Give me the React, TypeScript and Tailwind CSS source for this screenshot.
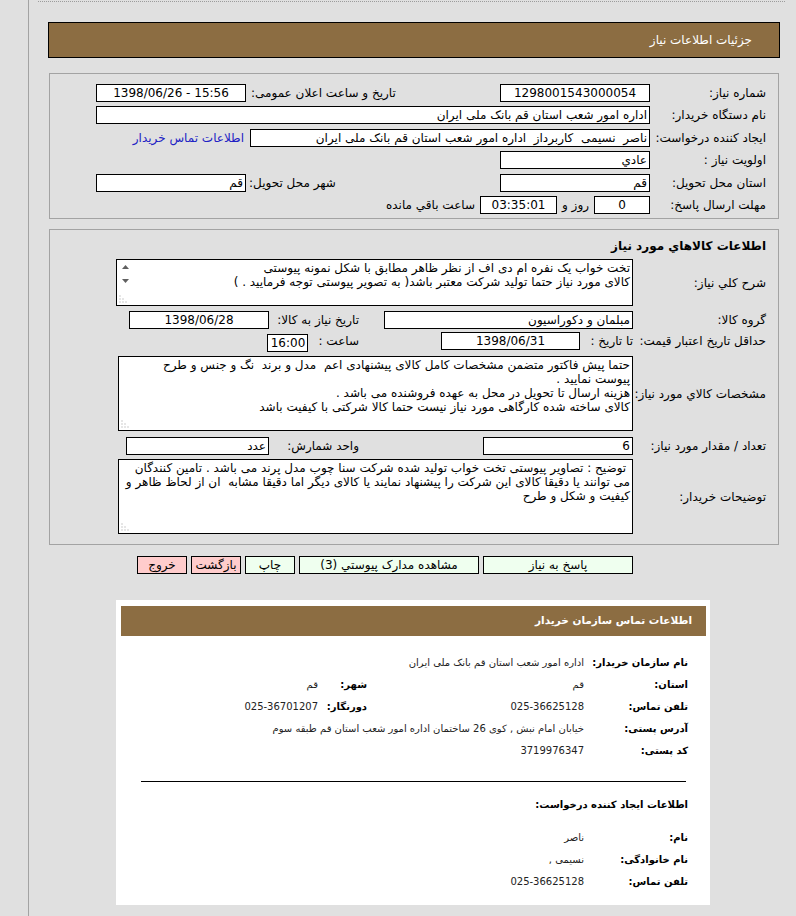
import React from 'react';

// read-only box that looks like an old-style input
function Box({ value, className = '', ltr = false }: { value: string; className?: string; ltr?: boolean }) {
  return (
    <div
      dir={ltr ? 'ltr' : undefined}
      className={`h-[18px] shrink-0 overflow-hidden whitespace-pre border border-black bg-white px-[2px] leading-[16px] ${className}`}
    >
      {value}
    </div>
  );
}

function Grip() {
  return (
    <svg className="absolute bottom-[2px] left-[2px]" width="8" height="8" viewBox="0 0 8 8">
      {[
        [1, 1], [1, 4], [1, 7], [4, 4], [4, 7], [7, 7],
      ].map(([x, y], i) => (
        <rect key={i} x={x - 0.5} y={y - 0.5} width="1" height="1" fill="#9a9a9a" />
      ))}
    </svg>
  );
}

function Area({ lines, className = '', scroll = false }: { lines: string[]; className?: string; scroll?: boolean }) {
  return (
    <div className={`relative shrink-0 overflow-hidden border border-black bg-white pr-[2px] pt-[1px] leading-[14px] ${className}`}>
      {lines.map((l, i) => (
        <div key={i} className="whitespace-pre">{l}</div>
      ))}
      {scroll && (
        <div className="absolute left-0 top-0 flex h-full w-[16px] flex-col items-center pt-[5px]">
          <svg width="7" height="4" viewBox="0 0 7 4"><path d="M0 4 L3.5 0 L7 4 Z" fill="#606060" /></svg>
          <svg className="mt-[10px]" width="7" height="4" viewBox="0 0 7 4"><path d="M0 0 L3.5 4 L7 0 Z" fill="#606060" /></svg>
        </div>
      )}
      <Grip />
    </div>
  );
}

function Btn({ label, className }: { label: string; className: string }) {
  return (
    <div className={`flex h-[18px] shrink-0 items-center justify-center whitespace-nowrap border border-black leading-[16px] ${className}`}>
      {label}
    </div>
  );
}

function InfoRow({ label, value, label2, value2, ltr = false, ltr2 = false }: {
  label: string; value: string; label2?: string; value2?: string; ltr?: boolean; ltr2?: boolean;
}) {
  return (
    <div className="flex h-[22px] items-center">
      <div className="w-[104px] shrink-0 whitespace-nowrap text-[10px] font-bold">{label}</div>
      <div className="w-[217px] shrink-0 whitespace-nowrap text-[10px] text-[#222]">
        <span dir={ltr ? 'ltr' : undefined}>{value}</span>
      </div>
      {label2 && <div className="w-[49px] shrink-0 whitespace-nowrap text-[10px] font-bold">{label2}</div>}
      {value2 && (
        <div className="whitespace-nowrap text-[10px] text-[#222]">
          <span dir={ltr2 ? 'ltr' : undefined}>{value2}</span>
        </div>
      )}
    </div>
  );
}

export default function App() {
  return (
    <div dir="rtl" className="min-h-[916px] w-[796px] bg-[#e0e0e0] font-['DejaVu_Sans',sans-serif] text-[12px] text-black">
      <div className="ml-[28px] min-h-[916px] border-l border-[#a3a3a3] pt-px">
        <div className="ml-[9px] mr-[11px] border-t border-dotted border-[#9c9c9c]" />

        {/* page title */}
        <div className="mr-[16px] mt-[20px] flex h-[36px] w-[732px] items-center border border-black bg-[#8c6d42] pr-[27px] text-white">
          جزئیات اطلاعات نیاز
        </div>

        {/* need details */}
        <div className="mr-[17px] mt-[15px] h-[146px] w-[730px] border border-[#a3a3a3] pr-[12px] pt-[8px]">
          <div className="flex h-[22px] items-center">
            <div className="w-[116px] shrink-0">شماره نیاز:</div>
            <Box value="1298001543000054" className="w-[150px] text-center" />
            <div className="w-[254px] shrink-0 pl-[5px] text-left">تاریخ و ساعت اعلان عمومی:</div>
            <Box value="1398/06/26 - 15:56" ltr className="w-[150px] text-center" />
          </div>
          <div className="flex h-[22px] items-center">
            <div className="w-[116px] shrink-0">نام دستگاه خریدار:</div>
            <Box value="اداره امور شعب استان قم بانک ملی ایران" className="w-[554px]" />
          </div>
          <div className="flex h-[23px] items-center">
            <div className="w-[116px] shrink-0">ایجاد کننده درخواست:</div>
            <Box value="ناصر  نسیمی  کاربرداز  اداره امور شعب استان قم بانک ملی ایران" className="w-[400px]" />
            <div className="whitespace-nowrap pr-[6px] text-[#2121c4]">اطلاعات تماس خریدار</div>
          </div>
          <div className="flex h-[22px] items-center">
            <div className="w-[116px] shrink-0">اولویت نیاز :</div>
            <Box value="عادي" className="w-[150px]" />
          </div>
          <div className="flex h-[23px] items-center">
            <div className="w-[116px] shrink-0">استان محل تحویل:</div>
            <Box value="قم" className="w-[150px]" />
            <div className="w-[254px] shrink-0 pl-[3px] text-left">شهر محل تحویل:</div>
            <Box value="قم" className="w-[150px]" />
          </div>
          <div className="flex h-[22px] items-center">
            <div className="w-[116px] shrink-0">مهلت ارسال پاسخ:</div>
            <Box value="0" className="w-[56px] text-center" />
            <div className="shrink-0 px-[5px] whitespace-nowrap">روز و</div>
            <Box value="03:35:01" ltr className="w-[77px] text-center" />
            <div className="shrink-0 pr-[5px] whitespace-nowrap">ساعت باقي مانده</div>
          </div>
        </div>

        {/* goods */}
        <div className="mr-[17px] mt-[10px] w-[730px] border border-[#a3a3a3] pb-[10px] pr-[12px] pt-[8px]">
          <div className="h-[16px] font-bold leading-[16px]">اطلاعات کالاهاي مورد نیاز</div>

          <div className="mt-[5px] flex items-center">
            <div className="w-[133px] shrink-0">شرح کلي نیاز:</div>
            <Area
              scroll
              className="h-[47px] w-[517px]"
              lines={[
                'تخت خواب یک نفره ام دی اف از نظر ظاهر مطابق با شکل نمونه پیوستی',
                'کالای مورد نیاز حتما تولید شرکت معتبر باشد( به تصویر پیوستی توجه فرمایید . )',
              ]}
            />
          </div>

          <div className="mt-[5px] flex h-[18px] items-center">
            <div className="w-[133px] shrink-0">گروه کالا:</div>
            <div className="w-[272px] shrink-0">
              <Box value="مبلمان و دکوراسیون" className="w-[249px]" />
            </div>
            <div className="w-[92px] shrink-0 pr-[2px]">تاریخ نیاز به کالا:</div>
            <Box value="1398/06/28" className="w-[140px] text-center" />
          </div>

          <div className="mt-[3px] flex h-[17px] items-center">
            <div className="w-[133px] shrink-0">حداقل تاریخ اعتبار قیمت:</div>
            <div className="flex w-[272px] shrink-0 items-center">
              <div className="w-[53px] shrink-0">تا تاریخ :</div>
              <Box value="1398/06/31" className="h-[17px] w-[139px] text-center leading-[15px]" />
            </div>
            <div className="shrink-0 pr-[2px]">ساعت :</div>
            <Box value="16:00" className="mr-[10px] mt-[4px] h-[16px] w-[41px] text-center leading-[14px]" />
          </div>

          <div className="mt-[7px] flex items-center">
            <div className="w-[133px] shrink-0">مشخصات کالاي مورد نیاز:</div>
            <Area
              className="h-[75px] w-[515px]"
              lines={[
                'حتما پیش فاکتور متضمن مشخصات کامل کالای پیشنهادی اعم  مدل و برند  نگ و جنس و طرح',
                'پیوست نمایید .',
                'هزینه ارسال تا تحویل در محل به عهده فروشنده می باشد .',
                'کالای ساخته شده کارگاهی مورد نیاز نیست حتما کالا شرکتی با کیفیت باشد',
              ]}
            />
          </div>

          <div className="mt-[6px] flex h-[17px] items-center">
            <div className="w-[133px] shrink-0">تعداد / مقدار مورد نیاز:</div>
            <div className="w-[272px] shrink-0">
              <Box value="6" className="h-[17px] w-[150px] leading-[15px]" />
            </div>
            <div className="w-[92px] shrink-0 pr-[2px]">واحد شمارش:</div>
            <Box value="عدد" className="h-[17px] w-[143px] leading-[15px]" />
          </div>

          <div className="mt-[5px] flex items-center">
            <div className="w-[133px] shrink-0">توضیحات خریدار:</div>
            <Area
              className="h-[75px] w-[515px]"
              lines={[
                ' توضیح : تصاویر پیوستی تخت خواب تولید شده شرکت سنا چوب مدل پرند می باشد . تامین کنندگان',
                'می توانند یا دقیقا کالای این شرکت را پیشنهاد نمایند یا کالای دیگر اما دقیقا مشابه  ان از لحاظ ظاهر و',
                'کیفیت و شکل و طرح',
              ]}
            />
          </div>
        </div>

        {/* actions */}
        <div className="mr-[163px] mt-[11px] flex gap-[4px]">
          <Btn label="پاسخ به نیاز" className="w-[150px] bg-[#efffef]" />
          <Btn label="مشاهده مدارک پیوستي (3)" className="w-[180px] bg-[#efffef]" />
          <Btn label="چاپ" className="w-[50px] bg-[#efffef]" />
          <Btn label="بازگشت" className="w-[50px] bg-[#ffcccc]" />
          <Btn label="خروج" className="w-[50px] bg-[#ffcccc]" />
        </div>

        {/* buyer contact card */}
        <div className="mr-[86px] mt-[26px] h-[305px] w-[594px] bg-white pl-[5px] pr-[4px] pt-[6px]">
          <div className="flex h-[30px] items-center bg-[#8c6d42] pr-[14px] text-[10.5px] font-bold text-white">
            اطلاعات تماس سازمان خریدار
          </div>
          <div className="mt-[15px] pr-[18px]">
            <InfoRow label="نام سازمان خریدار:" value="اداره امور شعب استان قم بانک ملی ایران" />
            <InfoRow label="استان:" value="قم" label2="شهر:" value2="قم" />
            <InfoRow label="تلفن تماس:" value="025-36625128" ltr label2="دورنگار:" value2="025-36701207" ltr2 />
            <InfoRow label="آدرس پستی:" value="خیابان امام نبش , کوی 26 ساختمان اداره امور شعب استان قم طبقه سوم" />
            <InfoRow label="کد پستی:" value="3719976347" />
          </div>
          <div className="mx-[20px] mt-[20px] border-t border-black" />
          <div className="mt-[15px] pr-[18px] text-[10px] font-bold">اطلاعات ایجاد کننده درخواست:</div>
          <div className="mt-[14px] pr-[18px]">
            <InfoRow label="نام:" value="ناصر" />
            <InfoRow label="نام خانوادگی:" value="نسیمی ," />
            <InfoRow label="تلفن تماس:" value="025-36625128" ltr />
          </div>
        </div>
      </div>
    </div>
  );
}
